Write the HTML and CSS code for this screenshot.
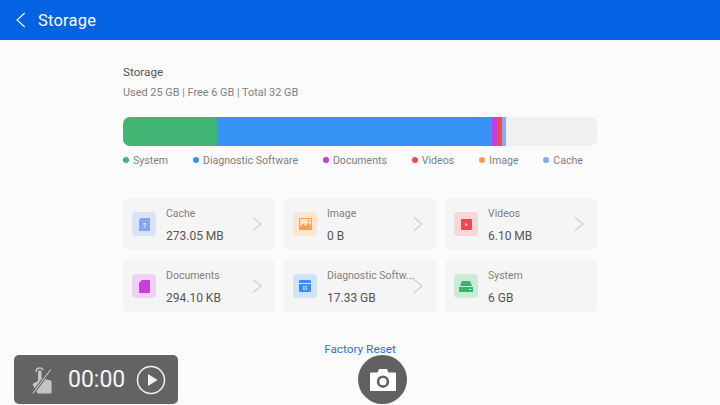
FILE: index.html
```html
<!DOCTYPE html>
<html lang="en">
<head>
<meta charset="utf-8">
<title>Storage</title>
<link rel="stylesheet" href="styles.css">
</head>
<body>
<header class="topbar">
  <svg class="back" width="12" height="16" viewBox="0 0 12 16"><path d="M9.700 1 2 8l7.700 7" fill="none" stroke="#fff" stroke-width="1.100"/></svg>
  <h1 class="title">Storage</h1>
</header>
<main class="content">
  <h2 class="heading">Storage</h2>
  <p class="summary">Used 25 GB | Free 6 GB | Total 32 GB</p>
  <div class="bar">
    <span class="seg seg-system"></span>
    <span class="seg seg-diag"></span>
    <span class="seg seg-docs"></span>
    <span class="seg seg-videos"></span>
    <span class="seg seg-cache"></span>
  </div>
  <ul class="legend">
    <li class="legend-item"><i class="dot c-system"></i>System</li>
    <li class="legend-item"><i class="dot c-diag"></i>Diagnostic Software</li>
    <li class="legend-item"><i class="dot c-docs"></i>Documents</li>
    <li class="legend-item"><i class="dot c-videos"></i>Videos</li>
    <li class="legend-item"><i class="dot c-image"></i>Image</li>
    <li class="legend-item"><i class="dot c-cache"></i>Cache</li>
  </ul>
  <div class="cards">
    <a class="card">
      <span class="tile t-cache"><svg width="11" height="13" viewBox="0 0 11 13"><path d="M1.500 0H11v13H0V1.500z" fill="#85a5f2"/><text x="5.500" y="9.500" class="q">?</text></svg></span>
      <span class="info"><span class="name">Cache</span><span class="val">273.05 MB</span></span>
      <svg class="chev" width="10" height="16" viewBox="0 0 10 16"><path d="M1 1.500 9 8l-8 6.500" fill="none" stroke="#cfcfcf" stroke-width="1.200"/></svg>
    </a>
    <a class="card">
      <span class="tile t-image"><svg width="13" height="12" viewBox="0 0 13 12"><path d="M0 0h13v12H0z" fill="#ffa04d"/><path d="M1 1h11v6.500L9.500 5 6.500 8 4 5.500 1 8.500z" fill="#fde0c4"/><circle cx="10" cy="3" r="1" fill="#ffa04d"/></svg></span>
      <span class="info"><span class="name">Image</span><span class="val">0 B</span></span>
      <svg class="chev" width="10" height="16" viewBox="0 0 10 16"><path d="M1 1.500 9 8l-8 6.500" fill="none" stroke="#cfcfcf" stroke-width="1.200"/></svg>
    </a>
    <a class="card">
      <span class="tile t-videos"><svg width="11" height="11" viewBox="0 0 11 11"><rect width="11" height="11" rx="1" fill="#f4444f"/><path d="M4.300 4 6.900 5.500 4.300 7z" fill="#fff"/></svg></span>
      <span class="info"><span class="name">Videos</span><span class="val">6.10 MB</span></span>
      <svg class="chev" width="10" height="16" viewBox="0 0 10 16"><path d="M1 1.500 9 8l-8 6.500" fill="none" stroke="#cfcfcf" stroke-width="1.200"/></svg>
    </a>
    <a class="card">
      <span class="tile t-docs"><svg width="11" height="13" viewBox="0 0 11 13"><path d="M3 0h7a1 1 0 0 1 1 1v11a1 1 0 0 1-1 1H1a1 1 0 0 1-1-1V3z" fill="#cf3be0"/></svg></span>
      <span class="info"><span class="name">Documents</span><span class="val">294.10 KB</span></span>
      <svg class="chev" width="10" height="16" viewBox="0 0 10 16"><path d="M1 1.500 9 8l-8 6.500" fill="none" stroke="#cfcfcf" stroke-width="1.200"/></svg>
    </a>
    <a class="card">
      <span class="tile t-diag"><svg width="12" height="12" viewBox="0 0 12 12"><path d="M1 0h10a1 1 0 0 1 1 1v2H0V1a1 1 0 0 1 1-1zM0 4h12v7a1 1 0 0 1-1 1H1a1 1 0 0 1-1-1z" fill="#3a8ff0"/><path d="M4 6h1.600v1.500H4zM6.400 6H8v1.500H6.400zM4 8.200h1.600v1.500H4zM6.400 8.200H8v1.500H6.400z" fill="#d3e5fa"/></svg></span>
      <span class="info"><span class="name">Diagnostic Softw...</span><span class="val">17.33 GB</span></span>
      <svg class="chev" width="10" height="16" viewBox="0 0 10 16"><path d="M1 1.500 9 8l-8 6.500" fill="none" stroke="#cfcfcf" stroke-width="1.200"/></svg>
    </a>
    <a class="card">
      <span class="tile t-system"><svg width="14" height="11" viewBox="0 0 14 11"><path d="M3 0h8l2 5H1z" fill="#3fb06f"/><path d="M0 6h14v5H0z" fill="#3fb06f"/><path d="M10 8h2.500v1H10z" fill="#d3efdf"/></svg></span>
      <span class="info"><span class="name">System</span><span class="val">6 GB</span></span>
    </a>
  </div>
  <a class="reset">Factory Reset</a>
</main>
<div class="recorder">
  <svg width="22" height="30" viewBox="0 0 22 30"><path d="M1.500 19l5.500-3V7a1.800 1.800 0 0 1 3.600 0v6l9 2.500a1.500 1.500 0 0 1 1 1.500v10a1.500 1.500 0 0 1-1.500 1.500H7.500a2 2 0 0 1-1.800-1.200z" fill="#c4c4c4"/><path d="M5 7a4 4 0 0 1 7.500-2" fill="none" stroke="#c4c4c4" stroke-width="1.500"/><path d="M1.700 28.500 19.700 4.500" stroke="#636363" stroke-width="3"/><path d="M1.700 28.500 19.700 4.500" stroke="#c4c4c4" stroke-width="1.200"/></svg>
  <span class="time">00:00</span>
  <svg width="30" height="30" viewBox="0 0 30 30"><circle cx="15" cy="15" r="13.500" fill="none" stroke="#f2f2f2" stroke-width="1.500"/><path d="M12 9 21.500 15 12 21z" fill="#f2f2f2"/></svg>
</div>
<button class="camera" aria-label="Camera">
  <svg width="26" height="22" viewBox="0 0 26 22"><path fill-rule="evenodd" d="M9 0h8l1.500 3.500H25a1 1 0 0 1 1 1V21a1 1 0 0 1-1 1H1a1 1 0 0 1-1-1V4.500a1 1 0 0 1 1-1h6.500zM13 6.500a6.200 6.200 0 1 0 0 12.400 6.200 6.200 0 0 0 0-12.400zm0 2.600a3.600 3.600 0 1 1 0 7.200 3.600 3.600 0 0 1 0-7.200z" fill="#fff"/></svg>
</button>
</body>
</html>
```
FILE: styles.css
```css
* { box-sizing: border-box; }
html, body { margin: 0; padding: 0; }
body {
  width: 720px;
  height: 405px;
  overflow: hidden;
  background: #fbfbfb;
  font-family: Roboto, "Liberation Sans", sans-serif;
  position: relative;
}
.topbar {
  height: 40px;
  background: #0363e2;
  display: flex;
  align-items: center;
  padding-left: 15px;
  gap: 11px;
}
.title {
  margin: 0;
  color: #fff;
  font-size: 16.500px;
  font-weight: 400;
  letter-spacing: 0.200px;
}
.content {
  width: 474px;
  margin-left: 123px;
  padding-top: 25px;
}
.heading {
  margin: 0;
  font-size: 11.700px;
  line-height: 14px;
  font-weight: 400;
  color: #555;
}
.summary {
  margin: 7px 0 0;
  font-size: 10.900px;
  line-height: 14px;
  color: #808080;
}
.bar {
  margin-top: 17px;
  height: 28.500px;
  background: #f0f0f0;
  border-radius: 7px;
  overflow: hidden;
  display: flex;
}
.seg { display: block; height: 100%; }
.seg-system { width: 94px; background: #41b574; }
.seg-diag { width: 275px; background: #3594f5; }
.seg-docs { width: 5px; background: #c63ee0; }
.seg-videos { width: 4.500px; background: #f7474f; }
.seg-cache { width: 4.500px; background: #85a9f5; }
.legend {
  list-style: none;
  margin: 8.500px 0 0;
  padding: 0;
  display: flex;
  justify-content: space-between;
  width: 460px;
}
.legend-item {
  display: flex;
  align-items: center;
  gap: 4px;
  font-size: 10.600px;
  line-height: 14px;
  color: #808080;
}
.dot { width: 6px; height: 6px; border-radius: 50%; margin-top: -2px; }
.c-system { background: #41b574; }
.c-diag { background: #3594f5; }
.c-docs { background: #c63ee0; }
.c-videos { background: #f7474f; }
.c-image { background: #ffa04d; }
.c-cache { background: #85a9f5; }
.cards {
  margin-top: 30px;
  display: grid;
  grid-template-columns: repeat(3, 152px);
  grid-auto-rows: 52px;
  column-gap: 9px;
  row-gap: 10px;
}
.card {
  background: #f5f5f5;
  border-radius: 4px;
  display: flex;
  align-items: center;
  padding-left: 9px;
  position: relative;
}
.tile {
  width: 24px;
  height: 24px;
  border-radius: 4px;
  display: flex;
  align-items: center;
  justify-content: center;
  flex: none;
}
.t-cache { background: #d8e2f8; }
.t-image { background: #fbe6d3; }
.t-videos { background: #f9d6d8; }
.t-docs { background: #f0d2f6; }
.t-diag { background: #d0e3f9; }
.t-system { background: #cdebd9; }
.q { font: 700 8px Roboto, sans-serif; fill: #e4ebfc; text-anchor: middle; }
.info {
  display: flex;
  flex-direction: column;
  margin-left: 10px;
  padding-top: 2px;
  width: 90px;
  white-space: nowrap;
}
.name {
  font-size: 10.500px;
  line-height: 14px;
  color: #808080;
}
.val {
  margin-top: 8px;
  font-size: 12px;
  line-height: 14px;
  color: #555;
}
.chev { position: absolute; right: 13px; top: 18px; }
.reset {
  display: block;
  margin-top: 30px;
  text-align: center;
  font-size: 11.800px;
  line-height: 14px;
  color: #1f74e6;
}
.recorder {
  position: absolute;
  left: 14px;
  top: 355px;
  width: 164px;
  height: 49px;
  background: #636363;
  border-radius: 5px;
  display: flex;
  align-items: center;
  padding-left: 17px;
}
.time {
  margin-left: 15px;
  margin-right: 11px;
  font-size: 23px;
  color: #f5f5f5;
  width: 57px;
}
.camera {
  position: absolute;
  left: 358px;
  top: 355px;
  width: 49px;
  height: 49px;
  border: 0;
  padding: 0;
  border-radius: 50%;
  background: #616161;
  display: flex;
  align-items: center;
  justify-content: center;
}
```
